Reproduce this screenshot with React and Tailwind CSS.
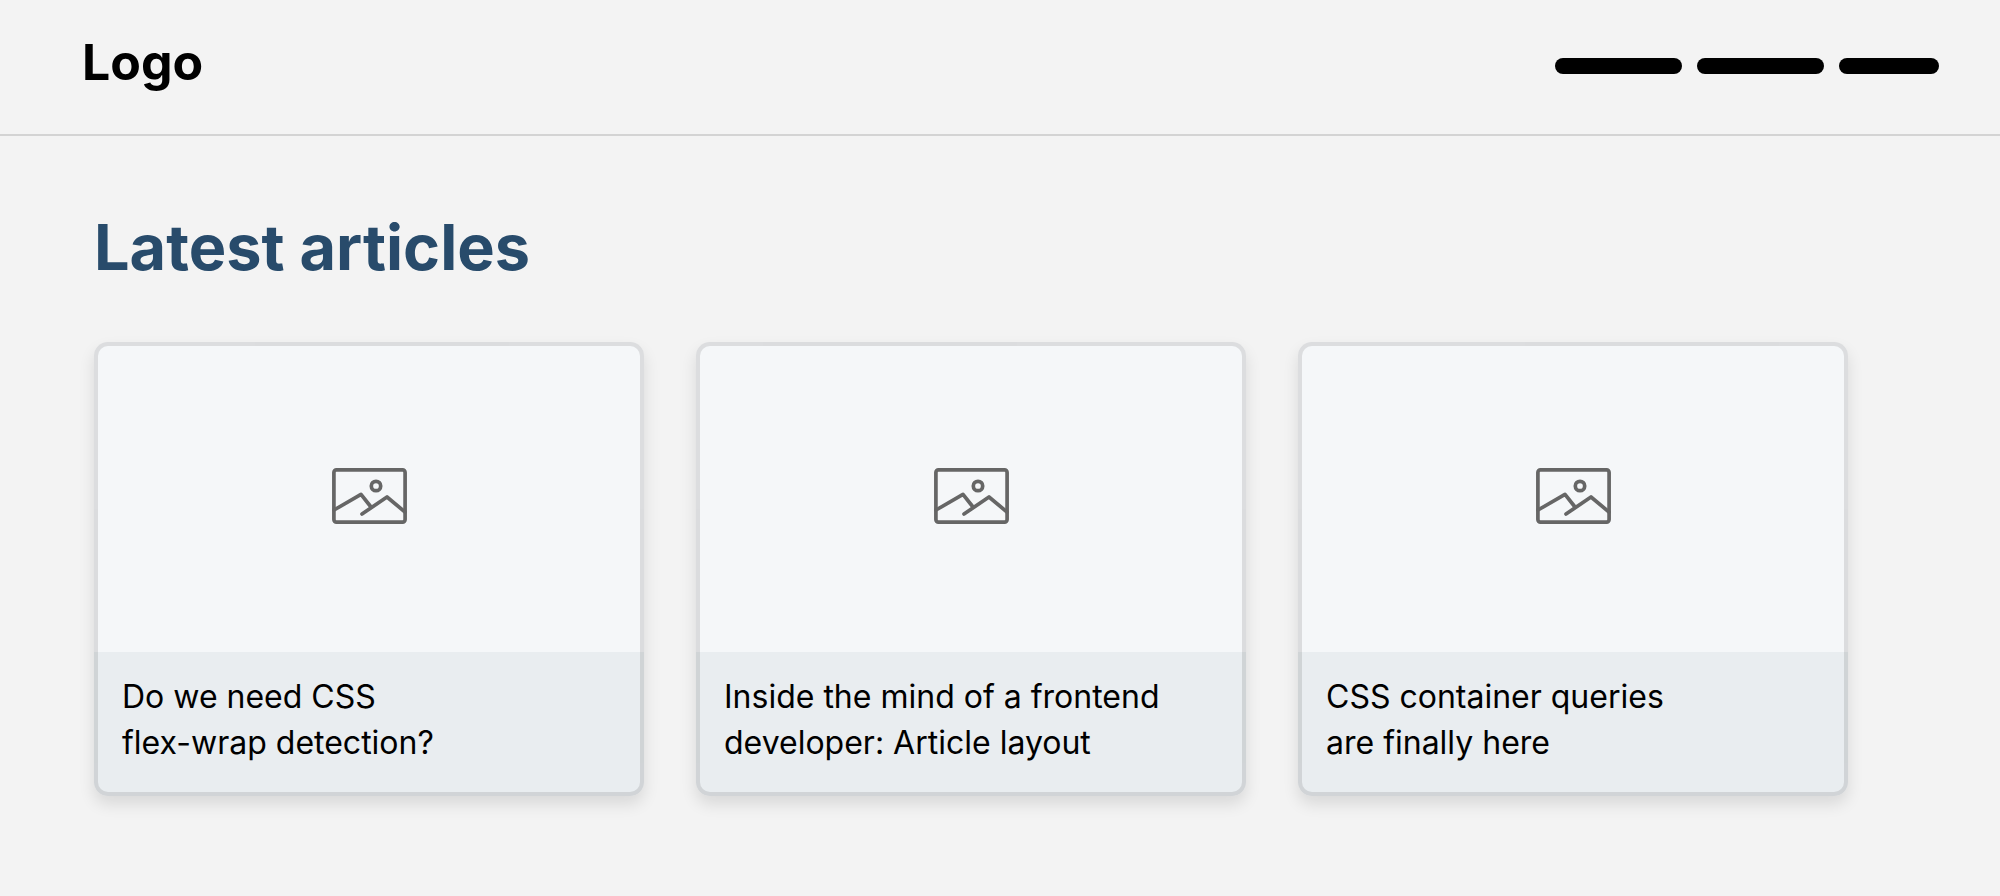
import React from "react";

const articles = [
  { id: 1, lines: ["Do we need CSS", "flex-wrap detection?"] },
  { id: 2, lines: ["Inside the mind of a frontend", "developer: Article layout"] },
  { id: 3, lines: ["CSS container queries", "are finally here"] },
];

const ImageIcon = () => (
  <svg
    viewBox="0 0 75 56"
    className="w-[75px] h-14 text-[#666666]"
    fill="none"
    stroke="currentColor"
    strokeWidth="3.7"
    strokeLinecap="round"
    strokeLinejoin="round"
    aria-hidden="true"
  >
    <rect x="1.9" y="1.9" width="71.2" height="52.2" rx="2.5" />
    <circle cx="44" cy="18" r="4.7" />
    <path d="M2 42L29 26.3L39 39" />
    <path d="M30 46L55 29L73 44" />
  </svg>
);

const ArticleCard = ({ lines }) => (
  <article className="flex flex-col rounded-[14px] shadow-[0_8px_16px_rgba(0,0,0,0.11)]">
    {/* Thumbnail placeholder */}
    <div className="h-[310px] flex items-center justify-center pb-1.5 bg-[#f5f7f9] border-4 border-b-0 border-black/10 rounded-t-[14px]">
      <ImageIcon />
    </div>
    <div className="flex-1 px-6 pt-[22px] pb-[26px] bg-[#e9edf0] border-4 border-t-0 border-black/10 rounded-b-[14px]">
      <h3 className="text-[32px] leading-[46px] text-black">
        {lines[0]}
        <br />
        {lines[1]}
      </h3>
    </div>
  </article>
);

const App = () => {
  return (
    <div className="min-h-screen bg-[#f3f3f3] font-['Inter',sans-serif]">
      {/* Header */}
      <header className="flex items-center justify-between pl-[82px] pr-[61px] pt-8 pb-[34px] border-b-2 border-[#d3d3d3]">
        <p className="pb-2 text-[50px] leading-[60px] font-bold text-black">Logo</p>
        <nav className="flex gap-[15px]">
          <a href="#" aria-label="Home" className="w-[127px] h-4 rounded-full bg-black"></a>
          <a href="#" aria-label="Articles" className="w-[127px] h-4 rounded-full bg-black"></a>
          <a href="#" aria-label="About" className="w-[100px] h-4 rounded-full bg-black"></a>
        </nav>
      </header>

      <main className="pl-[94px] pr-[152px] pt-[71px] pb-[98px]">
        <h2 className="text-[63px] leading-[80px] font-bold text-[#284b6b]">Latest articles</h2>
        <div className="grid grid-cols-3 gap-[52px] mt-[55px]">
          {articles.map((article) => (
            <ArticleCard key={article.id} lines={article.lines} />
          ))}
        </div>
      </main>
    </div>
  );
};

export default App;
